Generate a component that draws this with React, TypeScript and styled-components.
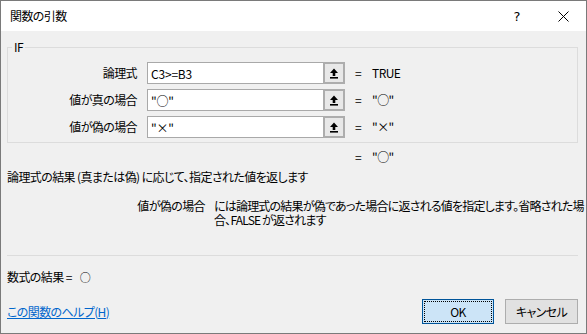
import React from 'react';
import styled, { createGlobalStyle } from 'styled-components';

const GlobalStyle = createGlobalStyle`
  html, body {
    margin: 0;
    padding: 0;
    background: #f0f0f0;
  }
  * {
    box-sizing: border-box;
  }
`;

type Arg = { name: string; value: string; result: string };

const args: Arg[] = [
  { name: '論理式', value: 'C3>=B3', result: 'TRUE' },
  { name: '値が真の場合', value: '"○"', result: '"○"' },
  { name: '値が偽の場合', value: '"×"', result: '"×"' },
];

function RefIcon() {
  return (
    <svg width='10' height='11' viewBox='0 0 10 11'>
      <path d='M5 0.5 L9 5 L6.3 5 L6.3 8 L3.7 8 L3.7 5 L1 5 Z' fill='#000' />
      <rect x='1' y='9' width='8' height='1.6' fill='#000' />
    </svg>
  );
}

function CloseIcon() {
  return (
    <svg width='11' height='11' viewBox='0 0 11 11'>
      <path d='M0.5 0.5 L10.5 10.5 M10.5 0.5 L0.5 10.5' stroke='#000' strokeWidth='1' />
    </svg>
  );
}

export default function App() {
  return (
    <>
      <GlobalStyle />
      <StyledWindow>
        <StyledTitleBar>
          <StyledTitle>関数の引数</StyledTitle>
          <StyledTitleButton>?</StyledTitleButton>
          <StyledTitleButton>
            <CloseIcon />
          </StyledTitleButton>
        </StyledTitleBar>
        <StyledBody>
          <StyledGroup>
            <StyledLegend>IF</StyledLegend>
            <StyledArgGrid>
              {args.map((arg) => (
                <React.Fragment key={arg.name}>
                  <StyledArgLabel>{arg.name}</StyledArgLabel>
                  <StyledField>
                    <StyledInput readOnly value={arg.value} />
                    <StyledRefButton>
                      <RefIcon />
                    </StyledRefButton>
                  </StyledField>
                  <StyledResult>
                    <span>=</span>
                    <span>{arg.result}</span>
                  </StyledResult>
                </React.Fragment>
              ))}
            </StyledArgGrid>
          </StyledGroup>
          <StyledFunctionResult>
            <span>=</span>
            <span>"○"</span>
          </StyledFunctionResult>
          <StyledDescription>
            論理式の結果 (真または偽) に応じて、指定された値を返します
          </StyledDescription>
          <StyledArgHelp>
            <StyledArgHelpName>値が偽の場合</StyledArgHelpName>
            <StyledArgHelpText>
              には論理式の結果が偽であった場合に返される値を指定します。省略された場
              <br />
              合、FALSE が返されます
            </StyledArgHelpText>
          </StyledArgHelp>
          <StyledFooter>
            <StyledFormulaResult>
              <span>数式の結果 =</span>
              <StyledCircle>○</StyledCircle>
            </StyledFormulaResult>
            <StyledActions>
              <StyledHelpLink href='#'>この関数のヘルプ(H)</StyledHelpLink>
              <StyledButton $primary>OK</StyledButton>
              <StyledButton>キャンセル</StyledButton>
            </StyledActions>
          </StyledFooter>
        </StyledBody>
      </StyledWindow>
    </>
  );
}

const StyledWindow = styled.div`
  width: 587px;
  height: 334px;
  border: 1px solid #7a7a7a;
  display: flex;
  flex-direction: column;
  font-family: 'Noto Sans CJK JP', sans-serif;
  font-feature-settings: 'palt';
  font-size: 12px;
  letter-spacing: -0.6px;
  color: #000;
  background: #f0f0f0;
  overflow: hidden;
`;

const StyledTitleBar = styled.div`
  height: 30px;
  flex-shrink: 0;
  display: flex;
  align-items: center;
  background: #ffffff;
  padding-left: 9px;
`;

const StyledTitle = styled.div`
  flex: 1;
  font-size: 12px;
  line-height: 16px;
`;

const StyledTitleButton = styled.div`
  width: 46px;
  height: 30px;
  display: flex;
  align-items: center;
  justify-content: center;
  font-family: 'DejaVu Sans', sans-serif;
  font-size: 13px;
  letter-spacing: 0;
  color: #000;
`;

const StyledBody = styled.div`
  flex: 1;
  display: flex;
  flex-direction: column;
  padding: 0 8px 0 6px;
`;

const StyledGroup = styled.fieldset`
  margin: 8px 0 0 0;
  padding: 7px 0 4px 0;
  border: 1px solid #dcdcdc;
  min-width: 0;
`;

const StyledLegend = styled.legend`
  margin-left: 4px;
  padding: 0 2px;
  line-height: 16px;
  font-size: 12px;
`;

const StyledArgGrid = styled.div`
  display: grid;
  grid-template-columns: 129px 198px auto;
  grid-auto-rows: 22px;
  column-gap: 10px;
  row-gap: 5px;
  align-items: center;
`;

const StyledArgLabel = styled.div`
  text-align: right;
  line-height: 16px;
`;

const StyledField = styled.div`
  display: flex;
  height: 22px;
  border: 1px solid #a9a9a9;
  background: #ffffff;
`;

const StyledInput = styled.input`
  flex: 1;
  min-width: 0;
  border: none;
  outline: none;
  padding: 0 0 0 3px;
  font: inherit;
  font-feature-settings: 'palt';
  letter-spacing: -0.2px;
  color: #000;
  background: transparent;
`;

const StyledRefButton = styled.div`
  width: 22px;
  height: 22px;
  margin: -1px -1px -1px 0;
  border: 2px solid #adadad;
  background: #e8e8e8;
  display: flex;
  align-items: center;
  justify-content: center;
`;

const StyledResult = styled.div`
  display: flex;
  gap: 11px;
  line-height: 16px;
`;

const StyledFunctionResult = styled.div`
  display: flex;
  gap: 11px;
  margin-top: 6px;
  padding-left: 348px;
  line-height: 16px;
`;

const StyledDescription = styled.div`
  margin-top: 4px;
  line-height: 16px;
`;

const StyledArgHelp = styled.div`
  display: grid;
  grid-template-columns: 198px 1fr;
  column-gap: 9px;
  margin-top: 14px;
  line-height: 14px;
`;

const StyledArgHelpName = styled.div`
  text-align: right;
`;

const StyledArgHelpText = styled.div`
  letter-spacing: -0.8px;
  white-space: nowrap;
`;

const StyledFooter = styled.div`
  margin-top: auto;
  border-top: 1px solid #dcdcdc;
  padding: 13px 0 9px 0;
  display: flex;
  flex-direction: column;
  gap: 14px;
`;

const StyledFormulaResult = styled.div`
  display: flex;
  align-items: center;
  gap: 8px;
  line-height: 16px;
`;

const StyledCircle = styled.span`
  font-size: 11px;
`;

const StyledActions = styled.div`
  display: flex;
  align-items: center;
  gap: 11px;
`;

const StyledHelpLink = styled.a`
  flex: 1;
  color: #0066cc;
  text-decoration: underline;
  line-height: 16px;
`;

const StyledButton = styled.button<{ $primary?: boolean }>`
  width: ${({ $primary }) => ($primary ? '72px' : '73px')};
  height: 25px;
  padding: 0;
  font: inherit;
  font-feature-settings: 'palt';
  letter-spacing: -0.6px;
  color: #000;
  border: 1px solid ${({ $primary }) => ($primary ? '#005499' : '#adadad')};
  background: ${({ $primary }) => ($primary ? '#cce4f7' : '#e1e1e1')};
  outline: ${({ $primary }) => ($primary ? '1px dotted #000' : 'none')};
  outline-offset: -3px;
`;
